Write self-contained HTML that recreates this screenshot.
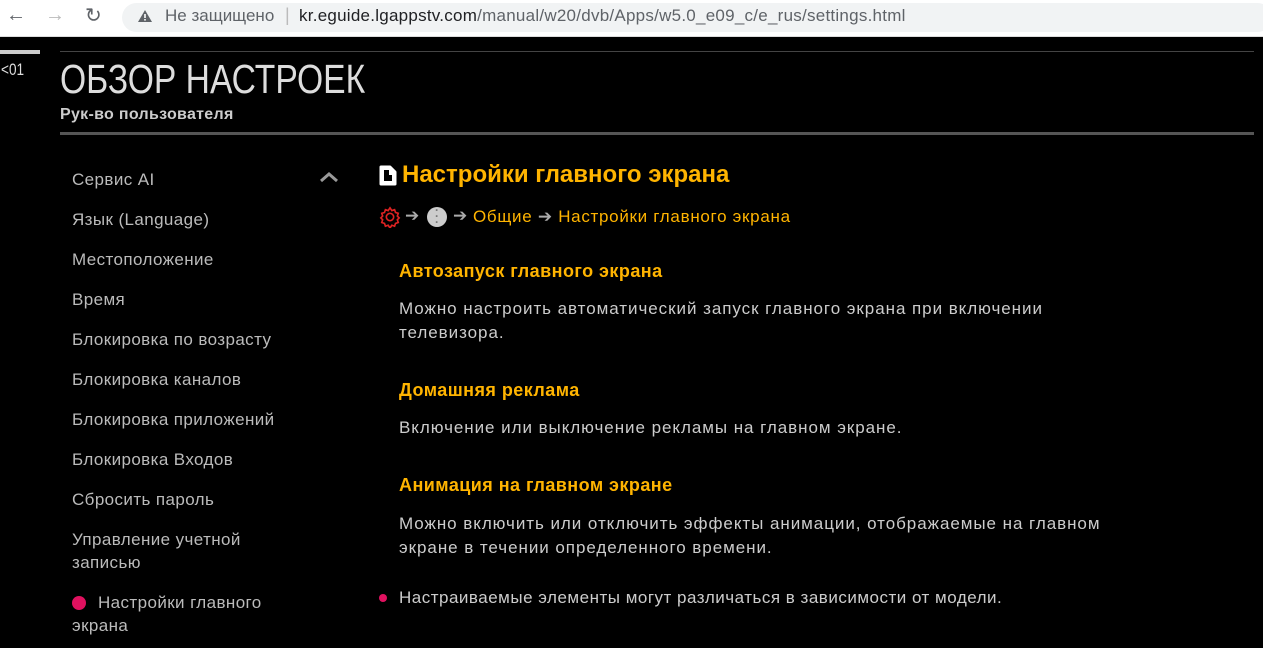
<!DOCTYPE html>
<html><head><meta charset="utf-8"><style>
*{margin:0;padding:0;box-sizing:border-box}
body{width:1263px;height:648px;overflow:hidden;background:#000;font-family:"Liberation Sans",sans-serif;position:relative}
.bar{position:absolute;left:0;top:0;width:1263px;height:37px;background:#fff;border-bottom:1px solid #ddd}
.url{position:absolute;left:122px;top:3px;width:1150px;height:29px;background:#f1f3f4;border-radius:15px}
.t{position:absolute;white-space:nowrap}
.nav{color:#5f6368;font-size:20px}
.side{position:absolute;left:72px;color:#bbb;font-size:17px;line-height:23px;letter-spacing:0.4px}
.h{color:#ffb400;font-weight:bold;font-size:18px;letter-spacing:0.45px}
.p{color:#ccc;font-size:17px;line-height:24px;letter-spacing:0.95px}
</style></head><body>
<div class="bar"></div>
<div class="url"></div>
<div class="t nav" style="left:6px;top:4px">&#8592;</div>
<div class="t nav" style="left:45px;top:4px;color:#bbb">&#8594;</div>
<div class="t nav" style="left:85px;top:3px">&#8635;</div>
<svg class="t" style="left:137px;top:9px" width="16" height="14"><path d="M8 1L15 13H1Z" fill="#5f6368"/><rect x="7.2" y="5" width="1.6" height="4" fill="#fff"/><rect x="7.2" y="10" width="1.6" height="1.6" fill="#fff"/></svg>
<div class="t" style="left:165px;top:6px;font-size:17px;color:#5f6368">Не защищено</div>
<div class="t" style="left:285px;top:5px;font-size:18px;color:#bbb">|</div>
<div class="t" style="left:299px;top:6px;font-size:17px;letter-spacing:0.25px;color:#202124">kr.eguide.lgappstv.com<span style="color:#5f6368">/manual/w20/dvb/Apps/w5.0_e09_c/e_rus/settings.html</span></div>

<div style="position:absolute;left:0;top:50px;width:40px;height:4px;background:#ccc"></div>
<div style="position:absolute;left:60px;top:51px;width:1194px;height:1px;background:#444"></div>
<div class="t" style="left:1px;top:60px;color:#ddd;font-size:17px;transform:scaleX(0.8);transform-origin:left">&lt;01</div>
<div class="t" style="left:60px;top:56px;color:#ddd;font-size:41px;transform:scaleX(0.82);transform-origin:left">ОБЗОР НАСТРОЕК</div>
<div class="t" style="left:60px;top:106px;color:#ccc;font-size:16px;font-weight:bold;letter-spacing:0.3px">Рук-во пользователя</div>
<div style="position:absolute;left:60px;top:132px;width:1194px;height:3px;background:#555"></div>

<div class="side t" style="top:168px">Сервис AI</div>
<svg class="t" style="left:318px;top:170px" width="22" height="14"><path d="M3 11L11 4L19 11" stroke="#999" stroke-width="3" fill="none"/></svg>
<div class="side t" style="top:208px">Язык (Language)</div>
<div class="side t" style="top:248px">Местоположение</div>
<div class="side t" style="top:288px">Время</div>
<div class="side t" style="top:328px">Блокировка по возрасту</div>
<div class="side t" style="top:368px">Блокировка каналов</div>
<div class="side t" style="top:408px">Блокировка приложений</div>
<div class="side t" style="top:448px">Блокировка Входов</div>
<div class="side t" style="top:488px">Сбросить пароль</div>
<div class="side" style="top:528px">Управление учетной<br>записью</div>
<div style="position:absolute;left:72px;top:596px;width:14px;height:14px;border-radius:50%;background:#e0115f"></div>
<div class="side" style="top:591px;left:72px"><span style="margin-left:26px">Настройки главного</span><br>экрана</div>

<svg class="t" style="left:379px;top:165px" width="18" height="21"><path d="M2 2H11L16 7V19H2Z" fill="#fff" stroke="#fff" stroke-width="3" stroke-linejoin="round"/><path d="M5 5H10V10H13V16H5Z" fill="#000"/></svg>
<div class="t" style="left:402px;top:161px;color:#ffb400;font-size:24px;font-weight:bold">Настройки главного экрана</div>
<svg class="t" style="left:379px;top:206px" width="22" height="22" viewBox="0 0 24 24"><path d="M12 2l2 3 3-1 1 3 3 1-1 3 2 2-2 2 1 3-3 1-1 3-3-1-2 3-2-3-3 1-1-3-3-1 1-3-2-2 2-2-1-3 3-1 1-3 3 1z" fill="none" stroke="#d22" stroke-width="1.8"/><circle cx="12" cy="12" r="4" fill="none" stroke="#d22" stroke-width="1.8"/></svg>
<div class="t" style="left:405px;top:206px;color:#aaa;font-size:17px">&#10132;</div>
<div style="position:absolute;left:427px;top:207px;width:20px;height:20px;border-radius:50%;background:#ccc"></div>
<div class="t" style="left:435px;top:207px;color:#777;font-size:12px;line-height:6px;font-weight:bold">·<br>·<br>·</div>
<div class="t" style="left:453px;top:206px;color:#aaa;font-size:17px">&#10132;</div>
<div class="t" style="left:473px;top:207px;color:#ffb400;font-size:17px;letter-spacing:0.7px">Общие <span style="color:#aaa">&#10132;</span> Настройки главного экрана</div>

<div class="t h" style="left:399px;top:261px">Автозапуск главного экрана</div>
<div class="p" style="position:absolute;left:399px;top:297px">Можно настроить автоматический запуск главного экрана при включении<br>телевизора.</div>
<div class="t h" style="left:399px;top:380px">Домашняя реклама</div>
<div class="p t" style="left:399px;top:416px">Включение или выключение рекламы на главном экране.</div>
<div class="t h" style="left:399px;top:475px">Анимация на главном экране</div>
<div class="p" style="position:absolute;left:399px;top:512px">Можно включить или отключить эффекты анимации, отображаемые на главном<br>экране в течении определенного времени.</div>
<div style="position:absolute;left:379px;top:594px;width:8px;height:8px;border-radius:50%;background:#e0115f"></div>
<div class="p t" style="left:399px;top:586px;letter-spacing:0.5px">Настраиваемые элементы могут различаться в зависимости от модели.</div>
</body></html>
